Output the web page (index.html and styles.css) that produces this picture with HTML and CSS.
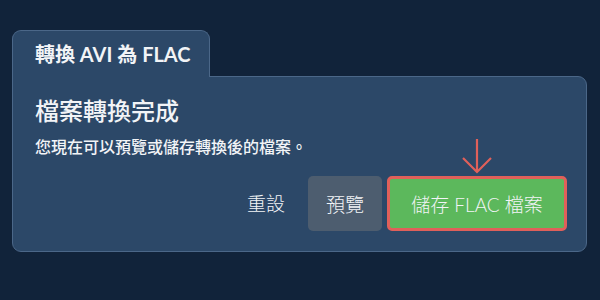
FILE: index.html
```html
<!DOCTYPE html>
<html>
<head>
  <title>轉換 AVI 為 FLAC</title>
  <link rel="stylesheet" href="styles.css">
</head>
<body>

  <div class="tab">轉換 AVI 為 FLAC</div>
  <div class="panel">
    <h2>檔案轉換完成</h2>
    <p class="note">您現在可以預覽或儲存轉換後的檔案。</p>

    <div class="actions">
      <button class="reset-button">重設</button>
      <button class="preview-button">預覽</button>
      <div class="save-wrap">
        <svg class="hint-arrow" width="32" height="36" viewBox="0 0 32 36">
          <path d="M16 1 V34 M2 20 L16 34 L30 20" fill="none" stroke="#e0605a" stroke-width="2.2"/>
        </svg>
        <button class="save-button">儲存 FLAC 檔案</button>
      </div>
    </div>
  </div>

</body>
</html>
```

FILE: styles.css
```css
body {
  font-family: Lato, "Noto Sans CJK TC", sans-serif;
  background-color: #11233a;
  color: #f2f4f7;
  margin: 0;
  padding: 30px 13px 0 12px;
}

.tab {
  position: relative;
  z-index: 1;
  box-sizing: border-box;
  width: 198px;
  height: 47px;
  margin-bottom: -1px;
  padding: 0 0 0 22px;
  line-height: 46px;
  font-size: 20px;
  font-weight: bold;
  background-color: #2c4868;
  border: 1px solid #4b6788;
  border-bottom: none;
  border-radius: 9px 9px 0 0;
}

.panel {
  background-color: #2c4868;
  border: 1px solid #4b6788;
  border-radius: 0 9px 9px 9px;
  padding: 18px 19px 20px 22px;
}

.panel h2 {
  margin: 0;
  font-size: 24px;
  line-height: 32px;
  font-weight: 500;
}

.note {
  margin: 8px 0 0;
  font-size: 16px;
  line-height: 24px;
  font-weight: 500;
}

.actions {
  display: flex;
  justify-content: flex-end;
  align-items: center;
  margin-top: 17px;
}

.actions button {
  font-family: inherit;
  font-size: 19px;
  font-weight: 300;
  color: #f2f4f7;
  border: none;
  cursor: pointer;
}

.reset-button {
  background: none;
  padding: 0;
  margin-right: 23px;
  height: 55px;
  line-height: 48px;
}

.preview-button {
  width: 74px;
  height: 55px;
  background-color: #4d5d6f;
  border-radius: 5px;
  margin-right: 5px;
}

.save-wrap {
  position: relative;
}

.hint-arrow {
  position: absolute;
  left: 74px;
  top: -38px;
}

.save-button {
  box-sizing: border-box;
  width: 180px;
  height: 55px;
  background-color: #5cb85c;
  border: 3px solid #e0605a !important;
  border-radius: 5px;
}
```
